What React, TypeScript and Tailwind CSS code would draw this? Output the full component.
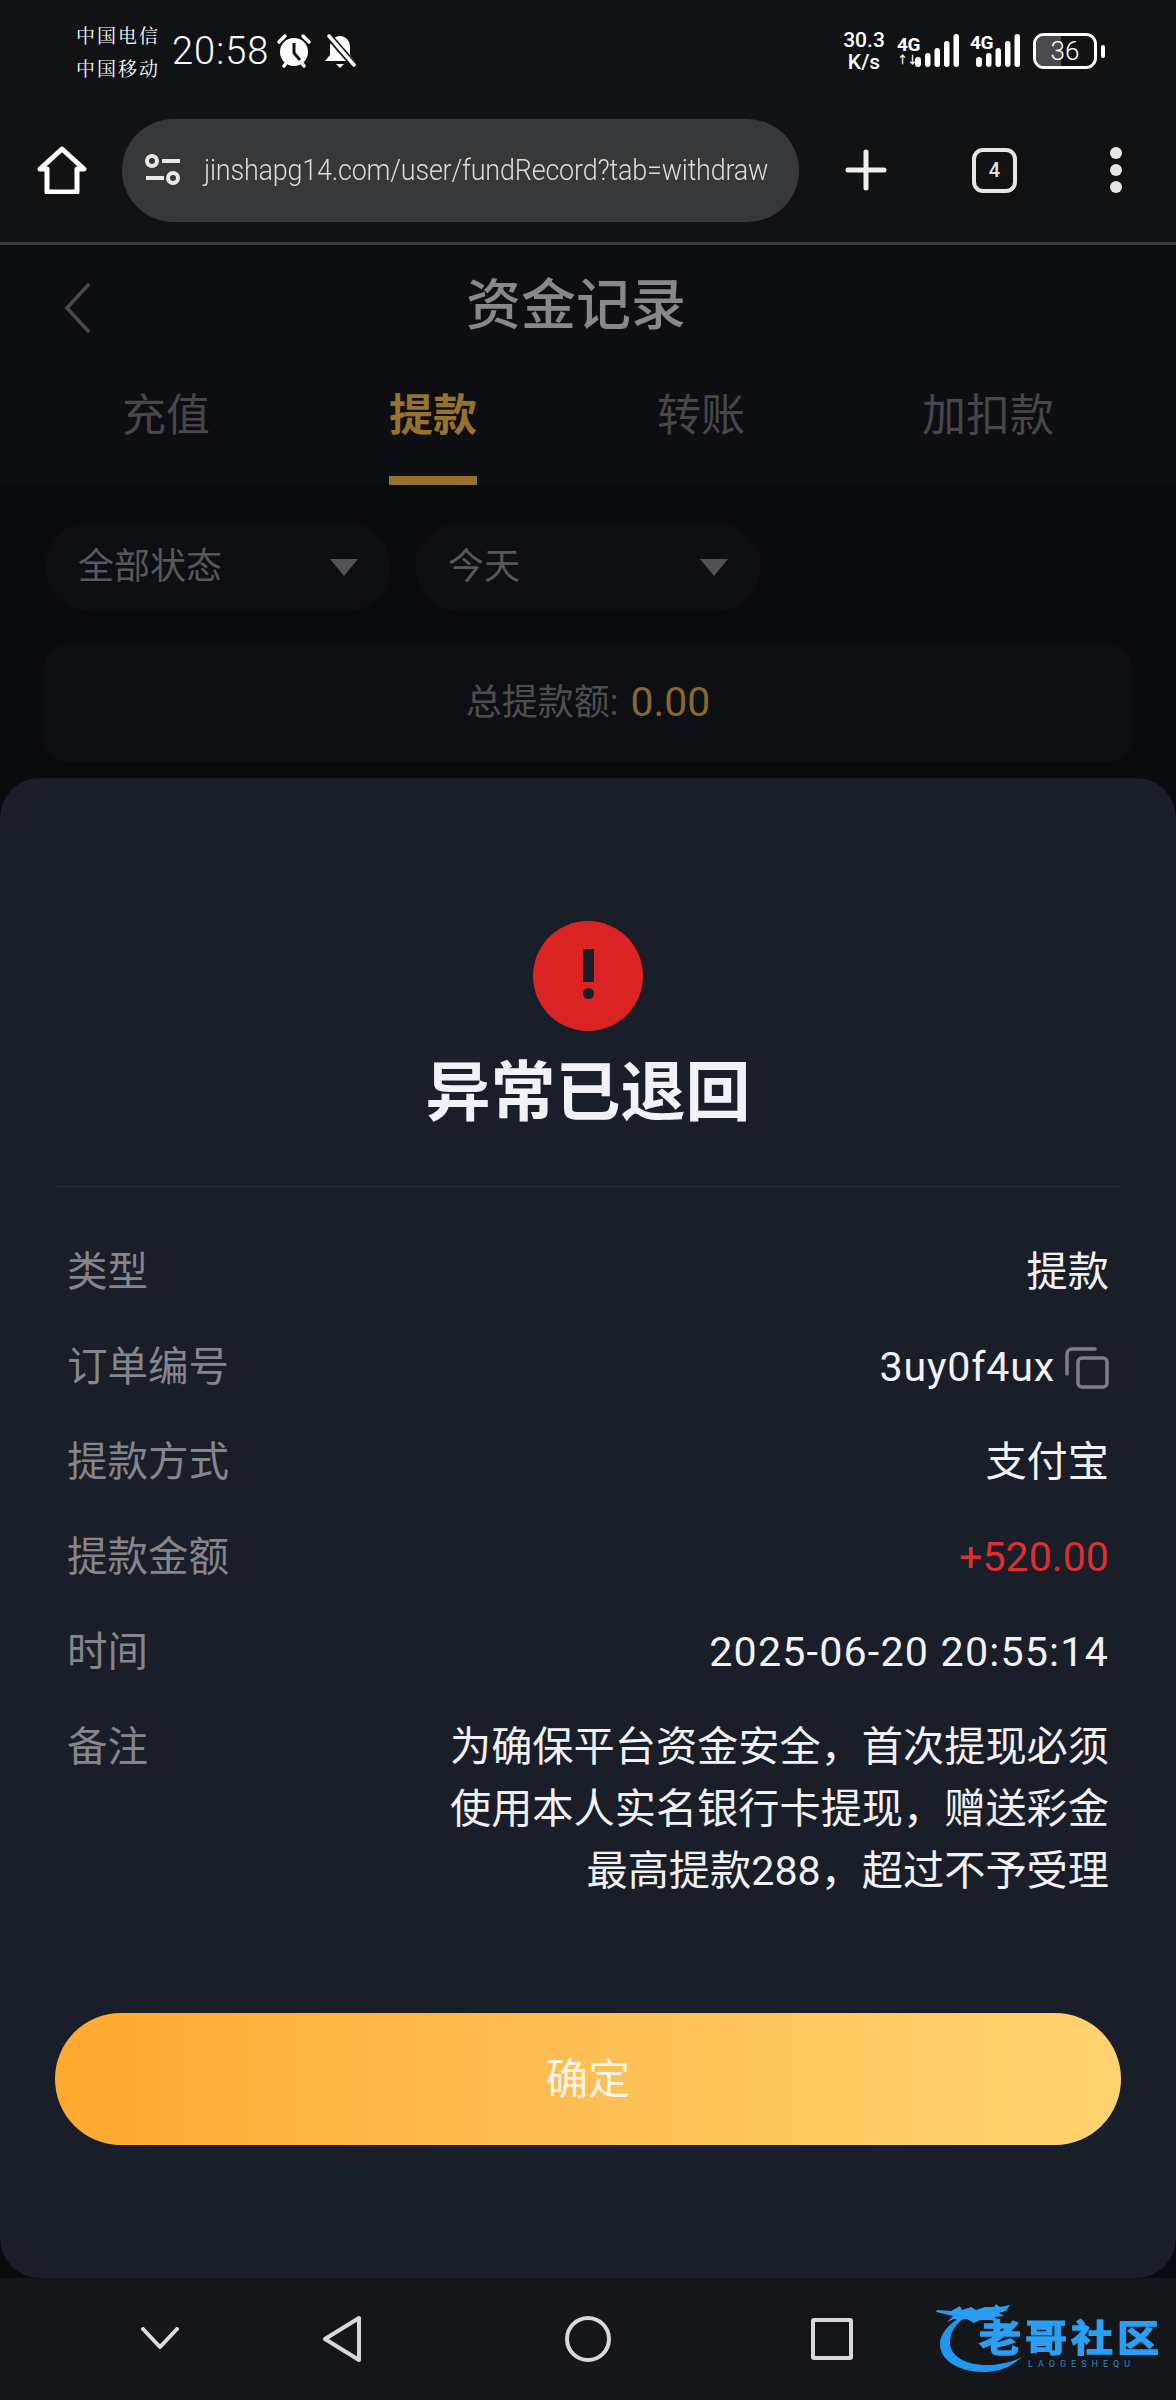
import React from "react";

const tabs = ["充值", "提款", "转账", "加扣款"];
const tabGaps = ["ml-[122px]", "ml-[179px]", "ml-[180px]", "ml-[177px]"];

const details = [
  { label: "类型", value: "提款" },
  { label: "订单编号", value: "3uy0f4ux", copy: true, spacing: "tracking-[0.8px]" },
  { label: "提款方式", value: "支付宝" },
  { label: "提款金额", value: "+520.00", red: true },
  { label: "时间", value: "2025-06-20 20:55:14", spacing: "tracking-[1.2px]" },
  { label: "备注", value: "为确保平台资金安全，首次提现必须使用本人实名银行卡提现，赠送彩金最高提款288，超过不予受理" },
];

const SignalBars = () => (
  <svg width="44" height="34" viewBox="0 0 44 34" fill="#fff" className="shrink-0">
    <rect x="0" y="23" width="6" height="10" rx="3" />
    <rect x="10" y="19" width="5.5" height="14" rx="2.7" />
    <rect x="19.5" y="14" width="5.5" height="19" rx="2.7" />
    <rect x="29" y="7" width="5.5" height="26" rx="2.7" />
    <rect x="38.5" y="0" width="5.5" height="33" rx="2.7" />
  </svg>
);

const StatusBar = () => (
  <div className="flex h-[100px] items-center justify-between pl-[76px] pr-[71px] pt-[2px] text-white">
    <div className="flex items-center">
      <div className="flex w-[96px] flex-col gap-[9px] text-[19px] leading-[24px] tracking-[2px] font-['Noto_Serif_CJK_SC','Noto_Sans_CJK_SC',sans-serif]">
        <span>中国电信</span>
        <span>中国移动</span>
      </div>
      <span className="w-[105px] text-[38px] font-light leading-none tracking-[1px]">20:58</span>
      <svg width="36" height="36" viewBox="0 0 36 36" className="ml-[-1px]">
        <circle cx="18" cy="19" r="14" fill="#fff" />
        <path d="M18 10v10l6 7" stroke="#111214" strokeWidth="3" fill="none" />
        <path d="M3 9l6-6M33 9l-6-6M8 33l3-4M28 33l-3-4" stroke="#fff" strokeWidth="3.5" strokeLinecap="round" />
      </svg>
      <svg width="32" height="36" viewBox="0 0 32 36" className="ml-[12px]">
        <path d="M16 3c6 0 10 5 10 11v8l5 6H1l5-6v-8C6 8 10 3 16 3z" fill="#fff" />
        <path d="M12 31h8l-4 4z" fill="#fff" />
        <path d="M3 1l27 31" stroke="#111214" strokeWidth="7" />
        <path d="M5 3l25 29" stroke="#fff" strokeWidth="3.5" strokeLinecap="round" />
      </svg>
    </div>
    <div className="flex items-center">
      <div className="flex w-[44px] flex-col items-center text-[21px] font-medium leading-[22px]">
        <span>30.3</span>
        <span>K/s</span>
      </div>
      <div className="ml-[11px] flex items-end">
        <div className="flex w-[18px] flex-col items-start">
          <span className="text-[19px] font-bold leading-[18px] tracking-[-0.5px]">4G</span>
          <span className="text-[11px] font-bold leading-[14px] tracking-[-1px]">↑↓</span>
        </div>
        <SignalBars />
      </div>
      <div className="relative ml-[11px] flex w-[50px] justify-end">
        <span className="absolute left-0 top-0 text-[19px] font-bold leading-[18px] tracking-[-0.5px]">4G</span>
        <SignalBars />
      </div>
      <div className="relative ml-[13px] flex h-[36px] w-[64px] items-center justify-center overflow-hidden rounded-[11px] border-[3px] border-white">
        <div className="absolute inset-y-0 left-0 w-[25px] bg-[#4a4a4c]" />
        <span className="relative text-[26px] font-light leading-none">36</span>
      </div>
      <div className="ml-[4px] h-[13px] w-[4px] rounded-full bg-white" />
    </div>
  </div>
);

const BrowserBar = () => (
  <div className="flex h-[145px] items-center border-b-[3px] border-[#3a3b3d] pb-[2px] pl-[37px]">
    <svg width="50" height="48" viewBox="0 0 50 48" fill="none" stroke="#fff" strokeWidth="5" strokeLinejoin="round" className="shrink-0">
      <path d="M3 23L25 3l22 20h-7v23H10V23z" />
    </svg>
    <div className="ml-[35px] flex h-[103px] w-[677px] shrink-0 items-center overflow-hidden rounded-[52px] bg-[#37383a] pl-[22px]">
      <svg width="38" height="32" viewBox="0 0 38 32" fill="none" stroke="#e8e8e8" strokeWidth="4" className="shrink-0">
        <circle cx="8" cy="7" r="5" />
        <path d="M18 7h18M2 24h18" />
        <circle cx="29" cy="24" r="5" />
      </svg>
      <span className="ml-[22px] origin-left whitespace-nowrap text-[30px] font-light leading-none tracking-[-0.2px] text-[#dcdcdc] scale-x-[0.897]">
        jinshapg14.com/user/fundRecord?tab=withdraw
      </span>
    </div>
    <svg width="42" height="42" viewBox="0 0 42 42" className="ml-[46px] shrink-0" stroke="#eee" strokeWidth="5" strokeLinecap="round">
      <path d="M21 3v36M3 21h36" />
    </svg>
    <div className="ml-[85px] flex h-[45px] w-[45px] shrink-0 items-center justify-center rounded-[11px] border-[4px] border-[#e6e6e6] text-[20px] font-medium text-[#e6e6e6]">
      4
    </div>
    <div className="ml-[93px] flex flex-col gap-[5px]">
      <div className="h-[12px] w-[12px] rounded-full bg-[#e6e6e6]" />
      <div className="h-[12px] w-[12px] rounded-full bg-[#e6e6e6]" />
      <div className="h-[12px] w-[12px] rounded-full bg-[#e6e6e6]" />
    </div>
  </div>
);

const FilterPill = ({ text }: { text: string }) => (
  <div className="flex h-[88px] w-[346px] items-center justify-between rounded-[44px] bg-[#0e0f13] pl-[33px] pr-[33px] text-[36px] text-[#58585c]">
    <span>{text}</span>
    <div className="h-0 w-0 border-x-[14px] border-t-[17px] border-x-transparent border-t-[#525256]" />
  </div>
);

const RecordPage = () => (
  <div className="h-full bg-[#0a0b0d]">
    <div className="relative h-[240px] bg-[#0d0e12]">
      <svg width="30" height="52" viewBox="0 0 30 52" fill="none" stroke="#4a4a4e" strokeWidth="3.5" className="absolute left-[63px] top-[37px]">
        <path d="M26 2L4 26l22 24" />
      </svg>
      <div className="pr-[24px] pt-[27px] text-center text-[55px] font-medium leading-[66px] text-[#88888c]">资金记录</div>
      <div className="absolute inset-x-0 top-[126px] flex text-[44px] leading-[90px] text-[#47474b]">
        {tabs.map((tab, i) => (
          <div key={tab} className={tabGaps[i]}>
            <div className={i === 1 ? "relative h-[114px] font-bold text-[#96722a]" : "h-[114px]"}>
              {tab}
              {i === 1 && <div className="absolute inset-x-0 bottom-0 h-[9px] bg-[#96722a]" />}
            </div>
          </div>
        ))}
      </div>
    </div>
    <div className="flex gap-[24px] pl-[45px] pt-[38px]">
      <FilterPill text="全部状态" />
      <FilterPill text="今天" />
    </div>
    <div className="mx-[44px] mt-[33px] flex h-[118px] items-center justify-center gap-[12px] rounded-[24px] bg-[#0e0f13]">
      <span className="text-[36px] text-[#4e4e52]">总提款额:</span>
      <span className="text-[41px] text-[#86692b]">0.00</span>
    </div>
  </div>
);

const ResultSheet = () => (
  <div className="absolute inset-x-0 bottom-0 top-[533px] flex flex-col rounded-[40px] bg-[#1a1e28] px-[55px] pt-[143px]">
    <div className="mx-auto flex h-[110px] w-[110px] flex-col items-center rounded-full bg-[#dc2323] pt-[28px]">
      <div className="h-[33px] w-[11px] bg-[#1a1e28]" />
      <div className="mt-[6px] h-[11px] w-[11px] rounded-full bg-[#1a1e28]" />
    </div>
    <h1 className="mt-[27px] text-center text-[65px] font-bold leading-[70px] text-[#f1f1f6]">异常已退回</h1>
    <div className="mt-[58px] h-px bg-[#2a2e38]" />
    <div className="mt-[54px] flex flex-col gap-[33px] px-[12px] text-[41.2px] leading-[62px]">
      {details.map((row) => (
        <div key={row.label} className="flex justify-between">
          <span className="text-[40.5px] text-[#85858c]">{row.label}</span>
          <div className={`flex w-[672px] items-center justify-end text-right ${row.red ? "text-[#dc2f2f]" : "text-[#f1f1f6]"}`}>
            <span className={row.spacing}>{row.value}</span>
            {row.copy && (
              <svg width="44" height="44" viewBox="0 0 44 44" fill="none" stroke="#7d7d84" strokeWidth="3.5" className="ml-[10px]">
                <rect x="13" y="13" width="29" height="29" rx="4" />
                <path d="M30 4H7a5 5 0 0 0-5 5v20" strokeLinecap="round" />
              </svg>
            )}
          </div>
        </div>
      ))}
    </div>
    <button className="mt-[111px] h-[132px] rounded-[66px] bg-gradient-to-r from-[#ffa92f] to-[#ffd470] text-[42px] font-normal text-[#fdf6e8]">
      确定
    </button>
  </div>
);

const NavBar = () => (
  <div className="relative flex h-[122px] items-center bg-[#15161a] pl-[141px]">
    <svg width="38" height="22" viewBox="0 0 38 22" fill="none" stroke="#dcdcdc" strokeWidth="4" strokeLinecap="round" strokeLinejoin="round" className="mb-[2px]">
      <path d="M2 2l17 18L36 2" />
    </svg>
    <svg width="40" height="48" viewBox="0 0 40 48" fill="none" stroke="#d8d8d8" strokeWidth="4" strokeLinejoin="round" className="ml-[143px]">
      <path d="M37 3v42L3 24z" />
    </svg>
    <svg width="46" height="46" viewBox="0 0 46 46" fill="none" stroke="#d8d8d8" strokeWidth="4" className="ml-[203px]">
      <circle cx="23" cy="23" r="21" />
    </svg>
    <div className="ml-[200px] h-[42px] w-[42px] rounded-[3px] border-[4px] border-[#d8d8d8]" />
    <div className="absolute bottom-0 right-0 h-[120px] w-[276px]">
      <svg width="276" height="120" viewBox="0 0 276 120" fill="none" className="absolute inset-0 blur-[0.7px]">
        {/* dragon body ring */}
        <path d="M63 36C48 44 40 54 40 64c0 16 18 28 44 28 16 0 28-6 38-15-12 6-24 8-36 8-20 0-36-9-36-22 0-11 6-19 14-25z" fill="#2098f2" />
        {/* dragon head and whiskers */}
        <path d="M37 30l14 1 9-5 2 4 9-3 5 3 9-3 9 0 2-3 4 3 10-2-4 6-7 2 5 3-10 1 6 4-12-1-8 0-6 3-7-4-9 1-4-1-7 3 6-6-8-2-9-2z" fill="#2a9cf2" />
      </svg>
      <div className="absolute left-[79px] top-[42px] flex h-[36px] w-[180px] scale-y-[0.88] items-center justify-between text-[42px] font-bold leading-none text-[#2a9ff4] blur-[0.4px] [-webkit-text-stroke:1.5px_#2a9ff4]">
        <span>老</span>
        <span>哥</span>
        <span>社</span>
        <span>区</span>
      </div>
      <div className="absolute left-[128px] top-[79px] text-[9px] leading-[10px] tracking-[5px] text-[#2a86cc]">LAOGESHEQU</div>
    </div>
  </div>
);

export default function App() {
  return (
    <div className="flex h-[2400px] w-[1176px] flex-col overflow-hidden bg-[#111214] font-[Roboto,'Noto_Sans_CJK_SC',sans-serif]">
      <StatusBar />
      <BrowserBar />
      <div className="relative flex-1">
        <RecordPage />
        <ResultSheet />
      </div>
      <NavBar />
    </div>
  );
}
